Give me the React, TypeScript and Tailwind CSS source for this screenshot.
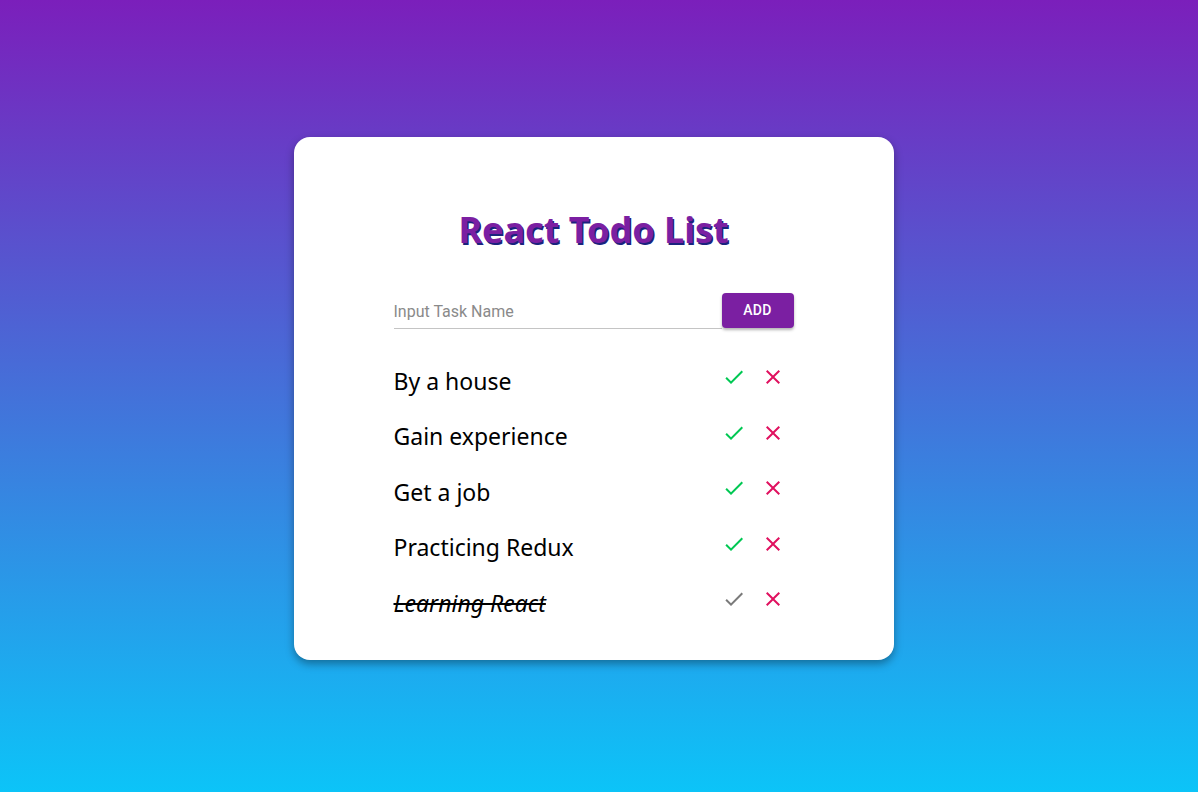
const todos = [
  { text: 'By a house', done: false },
  { text: 'Gain experience', done: false },
  { text: 'Get a job', done: false },
  { text: 'Practicing Redux', done: false },
  { text: 'Learning React', done: true },
];

const DoneIcon = ({ className }: { className: string }) => (
  <svg viewBox="0 0 24 24" className={className} fill="currentColor">
    <path d="M9 16.2L4.8 12l-1.4 1.4L9 19 21 7l-1.4-1.4L9 16.2z" />
  </svg>
);

const CloseIcon = ({ className }: { className: string }) => (
  <svg viewBox="0 0 24 24" className={className} fill="currentColor">
    <path d="M19 6.41L17.59 5 12 10.59 6.41 5 5 6.41 10.59 12 5 17.59 6.41 19 12 13.41 17.59 19 19 17.59 13.41 12z" />
  </svg>
);

export default function App() {
  return (
    <div className="min-h-screen w-full flex items-center justify-center pr-[11px] bg-[linear-gradient(to_bottom,#7b1fbb,#0cc4f8)] font-['Noto_Sans',sans-serif]">
      <div className="w-[600px] bg-white rounded-2xl shadow-[0_4px_8px_rgba(0,0,0,0.35)] px-[100px] pt-[70px] pb-[29px] mt-[5px]">
        <h1 className="text-center text-[36px] font-bold text-[#7b1fa2] leading-[46px] [text-shadow:1.5px_1.5px_0_#1a237e]">
          React Todo List
        </h1>
        <div className="mt-[40px] flex items-end">
          <div className="flex-1 border-b border-[#c4c4c4] pb-[4px]">
            <input
              placeholder="Input Task Name"
              className="w-full outline-none text-[16px] font-['Roboto',sans-serif] placeholder:text-[#8a8a8a] text-black"
            />
          </div>
          <button className="w-[72px] h-[35px] mb-[1px] rounded bg-[#7b1fa2] text-white text-[14px] font-medium font-['Roboto',sans-serif] tracking-wide shadow-[0_2px_3px_rgba(0,0,0,0.3)]">
            ADD
          </button>
        </div>
        <ul className="mt-[24px] flex flex-col">
          {todos.map((t) => (
            <li key={t.text} className="h-[55.5px] flex items-center justify-between">
              <span
                className={
                  'text-[23px] text-black ' + (t.done ? 'italic line-through' : '')
                }
              >
                {t.text}
              </span>
              <div className="flex items-center gap-[15px] mr-[9px] -mt-[8px]">
                <DoneIcon className={'w-6 h-6 ' + (t.done ? 'text-[#7a7a7a]' : 'text-[#00c853]')} />
                <CloseIcon className="w-6 h-6 text-[#e0115f]" />
              </div>
            </li>
          ))}
        </ul>
      </div>
    </div>
  );
}
